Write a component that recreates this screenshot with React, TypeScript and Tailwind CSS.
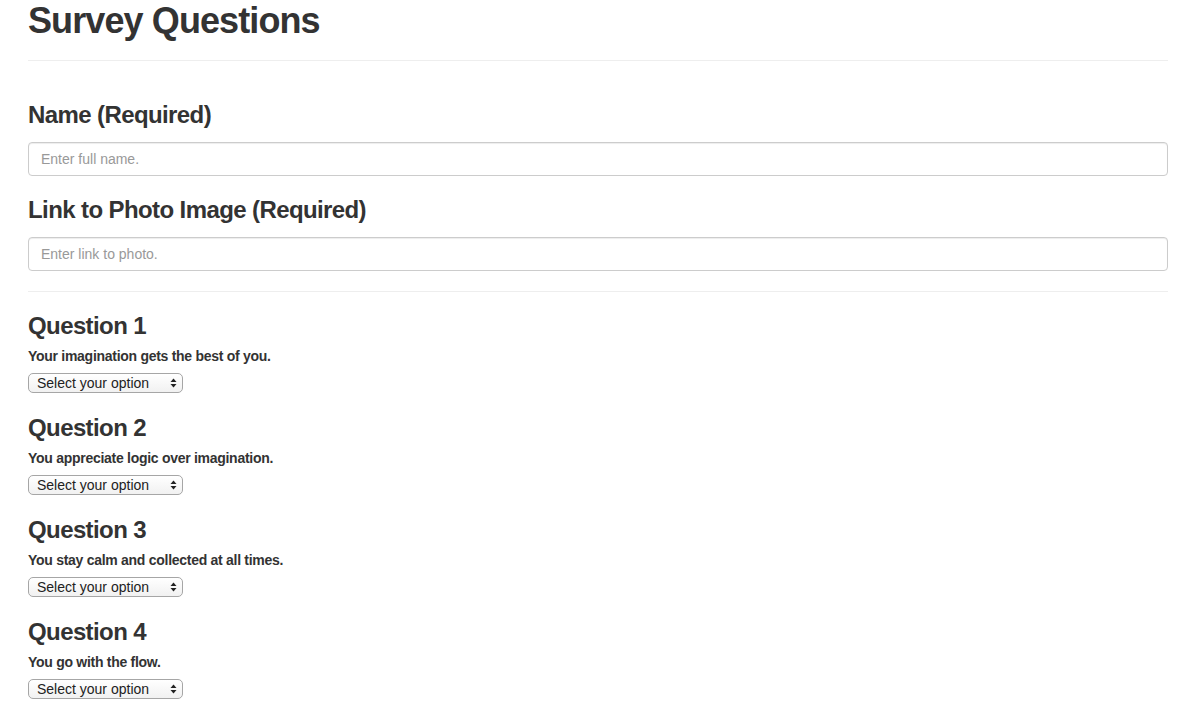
import React from "react";

const questions = [
  "Your imagination gets the best of you.",
  "You appreciate logic over imagination.",
  "You stay calm and collected at all times.",
  "You go with the flow.",
];

function SelectBox() {
  return (
    <div className="relative mt-[7px] h-[20px] w-[155px]">
      <select
        defaultValue=""
        className="block h-[20px] w-[155px] appearance-none rounded-[5px] border border-[#a6a6a6] bg-gradient-to-b from-[#ffffff] to-[#f1f1f1] pl-[8px] pr-[20px] text-[14px] leading-[18px] text-[#222] outline-none"
        style={{ fontFamily: '"Liberation Sans", Arial, sans-serif' }}
      >
        <option value="">Select your option</option>
        <option value="1">1 (Strongly Disagree)</option>
        <option value="2">2</option>
        <option value="3">3</option>
        <option value="4">4</option>
        <option value="5">5 (Strongly Agree)</option>
      </select>
      <svg
        className="pointer-events-none absolute left-[142px] top-[5px]"
        width="7"
        height="10"
        viewBox="0 0 7 10"
      >
        <polygon points="3.5,0.5 6.5,4 0.5,4" fill="#222" />
        <polygon points="0.5,6 6.5,6 3.5,9.5" fill="#222" />
      </svg>
    </div>
  );
}

export default function App() {
  const font = { fontFamily: '"Liberation Sans", Arial, Helvetica, sans-serif' };
  return (
    <div className="min-h-screen bg-white text-[#333]" style={font}>
      <div className="pl-[28px] pr-[20px] pb-[20px]">
        <h1 className="m-0 h-[40px] pt-px text-[36px] font-bold leading-[40px] tracking-[-0.025em] text-[#333]">
          Survey Questions
        </h1>
        <div className="mt-[20px] h-px bg-[#eeeeee]" />

        <h3 className="mt-[41px] text-[24px] font-bold leading-[26px] tracking-[-0.025em] text-[#333]">
          Name (Required)
        </h3>
        <input
          type="text"
          placeholder="Enter full name."
          className="mt-[14px] block h-[34px] w-full rounded-[4px] border border-[#cccccc] px-[12px] text-[14px] text-[#555] shadow-[inset_0_1px_1px_rgba(0,0,0,0.075)] outline-none placeholder:text-[#999]"
          style={font}
        />

        <h3 className="mt-[21px] text-[24px] font-bold leading-[26px] tracking-[-0.025em] text-[#333]">
          Link to Photo Image (Required)
        </h3>
        <input
          type="text"
          placeholder="Enter link to photo."
          className="mt-[14px] block h-[34px] w-full rounded-[4px] border border-[#cccccc] px-[12px] text-[14px] text-[#555] shadow-[inset_0_1px_1px_rgba(0,0,0,0.075)] outline-none placeholder:text-[#999]"
          style={font}
        />

        <div className="mt-[20px] h-px bg-[#eeeeee]" />

        <div className="pt-[21px]">
          {questions.map((q, i) => (
            <div key={i} className={i === 0 ? "" : "mt-[22px]"}>
              <h3 className="text-[24px] font-bold leading-[26px] tracking-[-0.025em] text-[#333]">
                Question {i + 1}
              </h3>
              <p className="mt-[7px] text-[14px] font-bold leading-[20px] tracking-[-0.02em] text-[#333]">
                {q}
              </p>
              <SelectBox />
            </div>
          ))}
        </div>
      </div>
    </div>
  );
}
